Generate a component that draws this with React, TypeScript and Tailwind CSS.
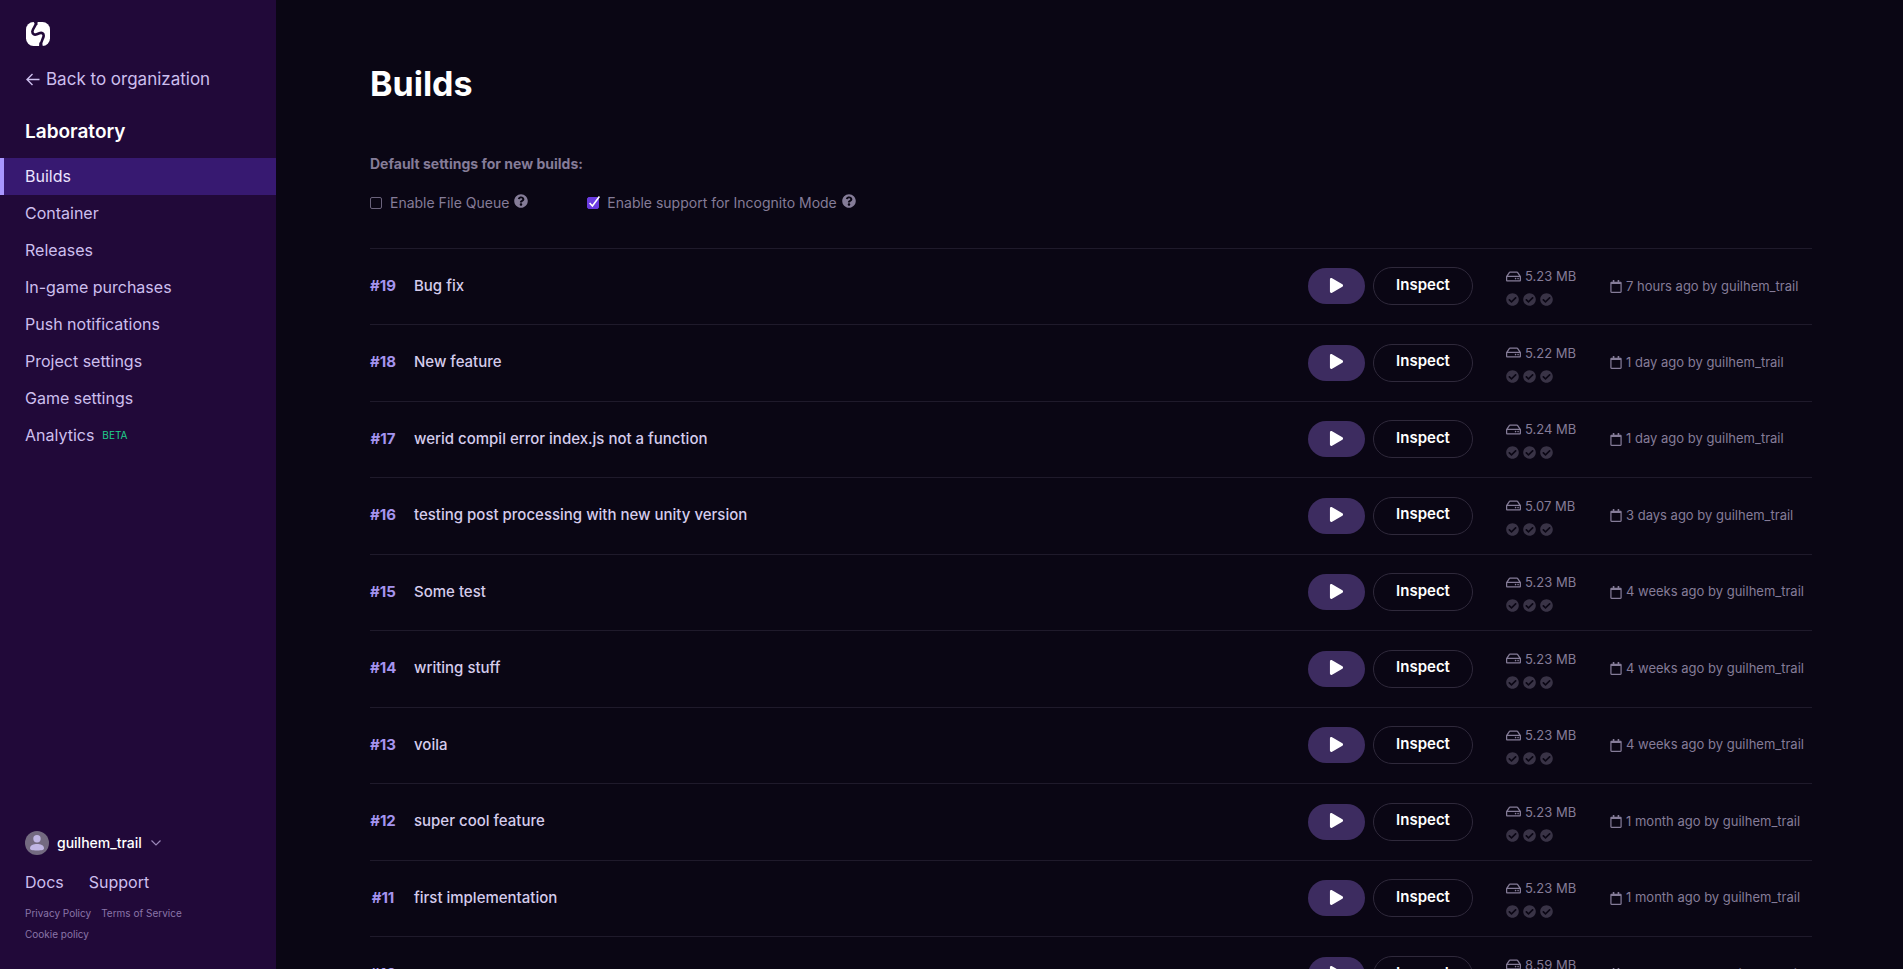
import React from 'react';
import { FaCheckCircle, FaPlay, FaQuestionCircle, FaRegCalendar, FaRegHdd } from 'react-icons/fa';

interface Build {
  id: number;
  name: string;
  size: string;
  uploaded: string;
}

const AUTHOR = 'guilhem_trail';

const BUILDS: Build[] = [
  { id: 19, name: 'Bug fix', size: '5.23 MB', uploaded: '7 hours ago' },
  { id: 18, name: 'New feature', size: '5.22 MB', uploaded: '1 day ago' },
  { id: 17, name: 'werid compil error index.js not a function', size: '5.24 MB', uploaded: '1 day ago' },
  { id: 16, name: 'testing post processing with new unity version', size: '5.07 MB', uploaded: '3 days ago' },
  { id: 15, name: 'Some test', size: '5.23 MB', uploaded: '4 weeks ago' },
  { id: 14, name: 'writing stuff', size: '5.23 MB', uploaded: '4 weeks ago' },
  { id: 13, name: 'voila', size: '5.23 MB', uploaded: '4 weeks ago' },
  { id: 12, name: 'super cool feature', size: '5.23 MB', uploaded: '1 month ago' },
  { id: 11, name: 'first implementation', size: '5.23 MB', uploaded: '1 month ago' },
  { id: 10, name: '', size: '8.59 MB', uploaded: '1 month ago' },
];

const NAV_ITEMS = [
  'Builds',
  'Container',
  'Releases',
  'In-game purchases',
  'Push notifications',
  'Project settings',
  'Game settings',
  'Analytics',
];

const Logo: React.FC = () => (
  <svg viewBox="0 0 24 24" className="size-6" fill="none">
    <rect width="24" height="24" rx="7.5" fill="#fff" />
    <path d="M7.6 0L9.4 2.6L11.6 3L11 0Z" fill="#210939" />
    <path d="M16.8 24L15.6 20.6L13.4 20.6L13.2 24Z" fill="#210939" />
    <path
      d="M10.4 -1C10.8 3.5 6.6 6.2 6.4 9.4C6.2 12 8.4 13.2 10.8 12.2L13.4 11.2C16 10.2 18 11.6 17.6 14.2C17.2 17 14.4 19.4 14.8 25"
      stroke="#210939"
      strokeWidth="2.6"
    />
  </svg>
);

const Sidebar: React.FC = () => (
  <aside className="flex w-[276px] shrink-0 flex-col bg-[#210939] pt-[22px] pb-6 text-[#cdbfee]">
    <a href="#" className="ml-[26px] size-6" aria-label="Home">
      <Logo />
    </a>
    <a href="#" className="mt-5 ml-[25px] flex items-center gap-[6px] text-[17px] leading-[26px]">
      <svg viewBox="0 0 15 15" className="size-[15px]" fill="none" stroke="currentColor" strokeWidth="1.4">
        <path d="M14.5 7.5H2M7.5 2L2 7.5L7.5 13" />
      </svg>
      Back to organization
    </a>
    <h2 className="mt-[27px] ml-[25px] text-[19px] leading-[26px] font-semibold text-white">Laboratory</h2>

    <nav className="mt-[13px] flex flex-col">
      {NAV_ITEMS.map((item) => (
        <a
          key={item}
          href="#"
          className={`flex h-[37px] items-center gap-2 border-l-4 pb-[2px] pl-[21px] text-base ${
            item === 'Builds' ? 'border-[#a896ff] bg-[#371971] text-[#ece4ff]' : 'border-transparent'
          }`}
        >
          {item}
          {item === 'Analytics' && <span className="pt-[2px] text-[10px] text-[#1fd18b]">BETA</span>}
        </a>
      ))}
    </nav>

    <div className="mt-auto px-[25px]">
      <button type="button" className="flex items-center gap-2 text-sm leading-6 font-medium text-white">
        <svg viewBox="0 0 24 24" className="size-6">
          <circle cx="12" cy="12" r="12" fill="#736a80" />
          <circle cx="12" cy="7.7" r="3.7" fill="#c0b6e4" />
          <path d="M5 17.2C5 14.2 8.6 12.9 12 12.9S19 14.2 19 17.2C19 19 17.2 19.4 12 19.4S5 19 5 17.2Z" fill="#c0b6e4" />
        </svg>
        {AUTHOR}
        <svg viewBox="0 0 10 6" className="ml-px h-[6px] w-[10px]" fill="none" stroke="#9b87b8" strokeWidth="1.2">
          <path d="M0.5 0.5L5 5L9.5 0.5" />
        </svg>
      </button>
      <div className="mt-[15px] flex gap-[25px] text-base">
        <a href="#">Docs</a>
        <a href="#">Support</a>
      </div>
      <div className="mt-[9px] flex flex-wrap gap-x-[10px] text-[10px] leading-[21px] text-[#8a75a8]">
        <a href="#">Privacy Policy</a>
        <a href="#">Terms of Service</a>
        <a href="#">Cookie policy</a>
      </div>
    </div>
  </aside>
);

interface SettingProps {
  id: string;
  label: string;
  defaultChecked?: boolean;
}

const Setting: React.FC<SettingProps> = ({ id, label, defaultChecked }) => (
  <div className="flex items-center">
    <span className="relative mr-2 size-3">
      <input
        id={id}
        type="checkbox"
        defaultChecked={defaultChecked}
        className="peer block size-3 appearance-none rounded-[2px] border border-[#6b637c] checked:border-[#6a3be0] checked:bg-[#6a3be0]"
      />
      <svg
        viewBox="0 0 14 14"
        className="pointer-events-none absolute -top-px left-0 hidden size-[14px] peer-checked:block"
        fill="none"
        stroke="#fff"
        strokeWidth="1.6"
      >
        <path d="M2.6 7L5.4 10L12.4 0.6" />
      </svg>
    </span>
    <label htmlFor={id} className="text-sm text-[#857c98]">
      {label}
    </label>
    <FaQuestionCircle className="mb-1 ml-[5px] size-[14px] text-[#857c98]" />
  </div>
);

const BuildRow: React.FC<{ build: Build }> = ({ build }) => (
  <tr className="h-[76px] border-b border-[#1f1a2b] first:h-[75px] even:h-[77px]">
    <td className="w-11 p-0">
      <div className="w-[26px] text-center text-[15px] font-bold text-[#a594ef]">#{build.id}</div>
    </td>
    <td className="p-0 text-[15px] font-medium text-[#d5ccec]">{build.name}</td>
    <td className="w-[198px] p-0">
      <div className="flex items-center gap-2">
        <button
          type="button"
          aria-label={`Play build ${build.id}`}
          className="flex h-9 w-[57px] items-center justify-center rounded-full bg-[#3d2c60] text-white"
        >
          <FaPlay className="mb-[2px] size-[15px]" />
        </button>
        <button
          type="button"
          className="h-[38px] w-[100px] rounded-full border border-[#2f293b] pb-[2px] text-[15px] font-semibold text-white"
        >
          Inspect
        </button>
      </div>
    </td>
    <td className="w-[104px] p-0 text-[13px] text-[#857c98]">
      <div className="flex items-center gap-1 leading-5">
        <FaRegHdd className="size-[15px]" />
        {build.size}
      </div>
      <div className="mt-[7px] flex gap-1 text-[#393346]">
        <FaCheckCircle className="size-[13px]" />
        <FaCheckCircle className="size-[13px]" />
        <FaCheckCircle className="size-[13px]" />
      </div>
    </td>
    <td className="w-[202px] p-0 text-[13px] text-[#857c98]">
      <div className="flex items-center gap-1 whitespace-nowrap">
        <FaRegCalendar className="h-[13px] w-3" />
        {build.uploaded} by {AUTHOR}
      </div>
    </td>
  </tr>
);

const App: React.FC = () => {
  return (
    <div className="flex h-screen overflow-hidden bg-[#0a0614] font-['Inter',sans-serif]">
      <Sidebar />
      <main className="min-w-0 flex-1 overflow-hidden pt-16 pr-[91px] pl-[94px]">
        <h1 className="text-[34px] leading-10 font-bold text-white">Builds</h1>

        <h3 className="mt-[47px] text-sm leading-[26px] font-bold text-[#857c98]">Default settings for new builds:</h3>
        <div className="mt-4 flex gap-[59px]">
          <Setting id="file-queue" label="Enable File Queue" />
          <Setting id="incognito" label="Enable support for Incognito Mode" defaultChecked />
        </div>

        <div className="mt-[35px] border-t border-[#1f1a2b]">
          <table className="w-full table-fixed border-collapse">
            <tbody>
              {BUILDS.map((build) => (
                <BuildRow key={build.id} build={build} />
              ))}
            </tbody>
          </table>
        </div>
      </main>
    </div>
  );
};

export default App;
